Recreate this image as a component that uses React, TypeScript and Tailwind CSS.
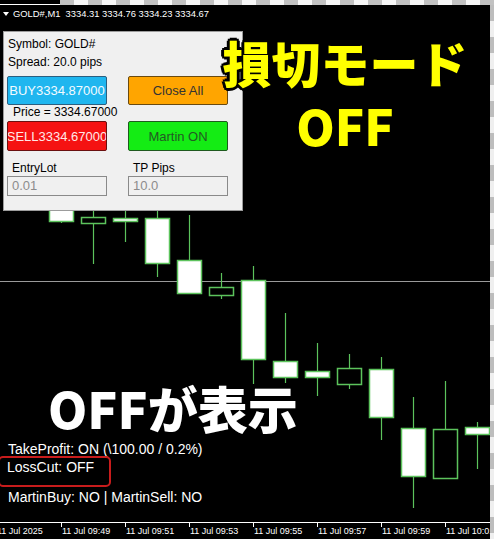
import React from "react";

type Candle = { x: number; wt: number; wb: number; bt: number; bb: number; f: boolean };

const candles: Candle[] = [
  { x: 61, wt: 180, wb: 223, bt: 180, bb: 221, f: true },
  { x: 93, wt: 180, wb: 264, bt: 217, bb: 223, f: false },
  { x: 125, wt: 180, wb: 242, bt: 218, bb: 221, f: true },
  { x: 157, wt: 180, wb: 277, bt: 218, bb: 263, f: true },
  { x: 189, wt: 215, wb: 294, bt: 260, bb: 293, f: true },
  { x: 221, wt: 273, wb: 299, bt: 287, bb: 295, f: false },
  { x: 253, wt: 266, wb: 384, bt: 280, bb: 359, f: true },
  { x: 285, wt: 313, wb: 383, bt: 361, bb: 377, f: true },
  { x: 317, wt: 343, wb: 396, bt: 371, bb: 377, f: true },
  { x: 349, wt: 354, wb: 389, bt: 368, bb: 384, f: false },
  { x: 381, wt: 357, wb: 440, bt: 369, bb: 417, f: true },
  { x: 413, wt: 397, wb: 508, bt: 428, bb: 476, f: true },
  { x: 445, wt: 381, wb: 429, bt: 429, bb: 478, f: false },
  { x: 477, wt: 422, wb: 469, bt: 427, bb: 434, f: true },
];

const ticks = [
  { x: -4, t: "11 Jul 2025", tick: false },
  { x: 61, t: "11 Jul 09:49", tick: true },
  { x: 125, t: "11 Jul 09:51", tick: true },
  { x: 189, t: "11 Jul 09:53", tick: true },
  { x: 253, t: "11 Jul 09:55", tick: true },
  { x: 317, t: "11 Jul 09:57", tick: true },
  { x: 381, t: "11 Jul 09:59", tick: true },
  { x: 445, t: "11 Jul 10:01", tick: true },
];

function Chart() {
  return (
    <svg className="absolute left-0 top-0" width={494} height={539} viewBox="0 0 494 539">
      <line x1={0} y1={281.5} x2={490} y2={281.5} stroke="#9a9a9a" strokeWidth={1} />
      {candles.map((c, i) => (
        <g key={i}>
          <line x1={c.x + 0.5} y1={c.wt} x2={c.x + 0.5} y2={c.wb} stroke="#5cc35c" strokeWidth={1.2} />
          <rect
            x={c.x - 11.5}
            y={c.bt + 0.5}
            width={24}
            height={Math.max(c.bb - c.bt, 2)}
            fill={c.f ? "#ffffff" : "#000000"}
            stroke="#5cc35c"
            strokeWidth={1.5}
          />
        </g>
      ))}
      <line x1={0} y1={522.5} x2={490} y2={522.5} stroke="#ffffff" strokeWidth={1} />
      {ticks.map((t, i) => (
        <g key={i}>
          {t.tick && <line x1={t.x + 0.5} y1={522} x2={t.x + 0.5} y2={527} stroke="#ffffff" strokeWidth={1} />}
          <text x={t.x + 1} y={534} fill="#ffffff" fontSize={9} fontFamily="'Liberation Sans', Arial, sans-serif">
            {t.t}
          </text>
        </g>
      ))}
    </svg>
  );
}

function Btn({ cls, children }: { cls: string; children: React.ReactNode }) {
  return (
    <div className={`w-[100px] flex items-center justify-center rounded-[2px] border text-[13px] leading-none whitespace-nowrap overflow-hidden ${cls}`}>
      {children}
    </div>
  );
}

function Panel() {
  return (
    <div className="absolute left-[3px] top-[31px] w-[240px] h-[180px] bg-[#f0f0f0] border border-[#9c9c9c] px-[3px] text-[12px] leading-[14px] text-black font-['Liberation_Sans',Arial,sans-serif]">
      <div className="pl-[1px] mt-[5px]">Symbol: GOLD#</div>
      <div className="pl-[1px] mt-[4px]">Spread: 20.0 pips</div>
      <div className="flex gap-[21px] mt-[7px] h-[29px]">
        <Btn cls="bg-[#1fb6ef] border-[#2a5f80] text-[#f4fbff]">BUY3334.87000</Btn>
        <Btn cls="bg-[#ffa500] border-[#6a4a10] text-[#333333]">Close All</Btn>
      </div>
      <div className="pl-[6px]">Price = 3334.67000</div>
      <div className="flex gap-[21px] mt-[2px] h-[30px]">
        <Btn cls="bg-[#f51212] border-[#6a1010] text-[#ffe8e8]">SELL3334.67000</Btn>
        <Btn cls="bg-[#14ec14] border-[#1f5a1f] text-[#235a23]">Martin ON</Btn>
      </div>
      <div className="flex gap-[21px] mt-[10px]">
        <div className="w-[100px] pl-[5px]">EntryLot</div>
        <div className="w-[100px] pl-[5px]">TP Pips</div>
      </div>
      <div className="flex gap-[21px] mt-[1px]">
        <div className="w-[100px] h-[20px] border border-[#8a8a8a] bg-[#f0f0f0] pl-[4px] flex items-center text-[13px] text-[#8c8c8c]">0.01</div>
        <div className="w-[100px] h-[20px] border border-[#8a8a8a] bg-[#f0f0f0] pl-[4px] flex items-center text-[13px] text-[#8c8c8c]">10.0</div>
      </div>
    </div>
  );
}

export default function App() {
  return (
    <div className="relative w-[494px] h-[539px] overflow-hidden bg-black font-['Liberation_Sans',Arial,sans-serif]">
      <Chart />
      {/* top strip */}
      <div className="absolute left-0 top-0 w-[494px] h-[5px] flex">
        <div className="w-[60px] h-full border-b border-white bg-black" />
        <div className="flex-1 h-full bg-[repeating-linear-gradient(90deg,#c2c2c2_0px,#c2c2c2_14px,#f6f6f6_14px,#f6f6f6_28px)]" />
      </div>
      {/* right strip */}
      <div className="absolute right-0 top-[5px] w-[4px] h-[534px] bg-[repeating-linear-gradient(180deg,#bdbdbd_0px,#bdbdbd_16px,#efefef_16px,#efefef_32px)]" />
      {/* header */}
      <div className="absolute left-[3px] top-[8px] flex items-center gap-[4px] text-[9.4px] leading-[11px] text-white whitespace-pre">
        <svg width="6" height="5" viewBox="0 0 6 5" className="mt-[1px]">
          <polygon points="0,0 6,0 3,4" fill="#ffffff" />
        </svg>
        <span>GOLD#,M1  3334.31 3334.76 3334.23 3334.67</span>
      </div>
      <Panel />
      {/* yellow overlay */}
      <div className="absolute left-[220px] top-[37px] w-[250px] flex flex-col items-center text-[49px] leading-[49px] font-black text-[#ffff00] font-['Noto_Sans_CJK_JP',sans-serif] [text-shadow:3px_0_0_#000,-3px_0_0_#000,0_3px_0_#000,0_-3px_0_#000,2px_2px_0_#000,-2px_-2px_0_#000,2px_-2px_0_#000,-2px_2px_0_#000]">
        <div className="whitespace-nowrap">損切モード</div>
        <div className="mt-[14px]">OFF</div>
      </div>
      {/* white overlay */}
      <div className="absolute left-[48px] top-[383px] text-[50px] leading-[49px] font-black text-white whitespace-nowrap font-['Noto_Sans_CJK_JP',sans-serif]">
        OFFが表示
      </div>
      {/* status texts */}
      <div className="absolute left-[8px] top-[441px] text-[14px] leading-[16px] text-white whitespace-nowrap">
        TakeProfit: ON (\100.00 / 0.2%)
      </div>
      <div className="absolute left-[-2px] top-[456px] w-[113px] h-[31px] border-2 border-[#c81c1c] rounded-[5px] pl-[7px] pt-[1px] text-[14px] leading-[16px] text-white whitespace-nowrap">
        LossCut: OFF
      </div>
      <div className="absolute left-[8px] top-[489px] text-[14px] leading-[16px] text-white whitespace-nowrap">
        MartinBuy: NO | MartinSell: NO
      </div>
    </div>
  );
}
